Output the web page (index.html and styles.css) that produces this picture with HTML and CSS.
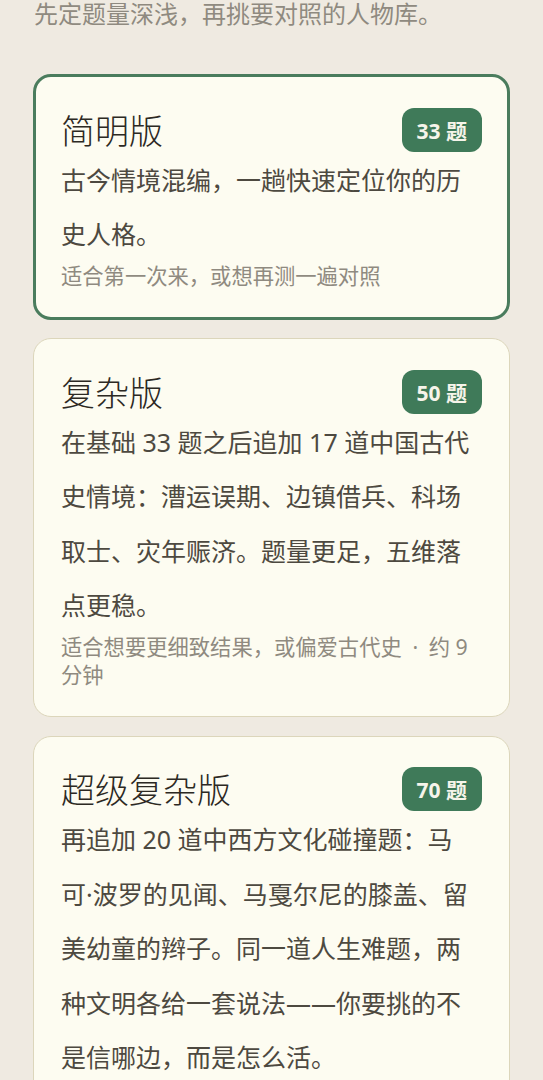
FILE: index.html
```html
<!DOCTYPE html>
<html lang="zh-CN">
<head>
<meta charset="utf-8">
<title>选择题量</title>
<link rel="stylesheet" href="styles.css">
</head>
<body>
<main class="page">
  <p class="intro">先定题量深浅，再挑要对照的人物库。</p>
  <div class="options">
    <section class="option is-selected">
      <div class="option-head">
        <h2 class="option-title">简明版</h2>
        <span class="count-badge">33 题</span>
      </div>
      <p class="option-desc">古今情境混编，一趟快速定位你的历史人格。</p>
      <p class="option-note">适合第一次来，或想再测一遍对照</p>
    </section>
    <section class="option">
      <div class="option-head">
        <h2 class="option-title">复杂版</h2>
        <span class="count-badge">50 题</span>
      </div>
      <p class="option-desc">在基础 33 题之后追加 17 道中国古代史情境：漕运误期、边镇借兵、科场取士、灾年赈济。题量更足，五维落点更稳。</p>
      <p class="option-note">适合想要更细致结果，或偏爱古代史&ensp;·&ensp;约 9 分钟</p>
    </section>
    <section class="option">
      <div class="option-head">
        <h2 class="option-title">超级复杂版</h2>
        <span class="count-badge">70 题</span>
      </div>
      <p class="option-desc">再追加 20 道中西方文化碰撞题：马可·波罗的见闻、马戛尔尼的膝盖、留美幼童的辫子。同一道人生难题，两种文明各给一套说法——你要挑的不是信哪边，而是怎么活。</p>
    </section>
  </div>
</main>
</body>
</html>
```

FILE: styles.css
```css
html, body {
  margin: 0;
  padding: 0;
}

body {
  background: #efeae1;
  font-family: "Noto Sans", "Noto Sans CJK SC", sans-serif;
  color: #4d4940;
}

.page {
  padding: 0 33px 40px;
}

.intro {
  margin: 0 0 48px;
  padding: 1px 0 0 1px;
  font-size: 24px;
  line-height: 25px;
  color: #8f8a80;
}

.options {
  display: flex;
  flex-direction: column;
  gap: 18.5px;
}

.option {
  background: #fdfcf1;
  border: 1px solid #dcd6bb;
  border-radius: 18px;
  padding: 30.5px 27px 26.5px;
}

.option.is-selected {
  border: 3px solid #4a7c5d;
  padding: 30.5px 25px 27px;
}

.option-head {
  display: flex;
  align-items: center;
  justify-content: space-between;
  height: 44px;
}

.option-title {
  margin: 0;
  font-family: "Noto Sans CJK SC", sans-serif;
  font-size: 34px;
  line-height: 44px;
  font-weight: 300;
  color: #2c2923;
}

.count-badge {
  display: inline-flex;
  align-items: center;
  justify-content: center;
  height: 44px;
  padding: 0 15px;
  border-radius: 12px;
  background: #3f7a59;
  color: #f6f4ea;
  font-size: 21px;
  font-weight: 700;
}

.option-desc {
  margin: 1px 9px 0 0;
  font-size: 25px;
  line-height: 54.5px;
  color: #4d4940;
}

.option-note {
  margin: 0 9px 0 0;
  font-size: 21.3px;
  line-height: 28.4px;
  color: #8f8a80;
}
```
